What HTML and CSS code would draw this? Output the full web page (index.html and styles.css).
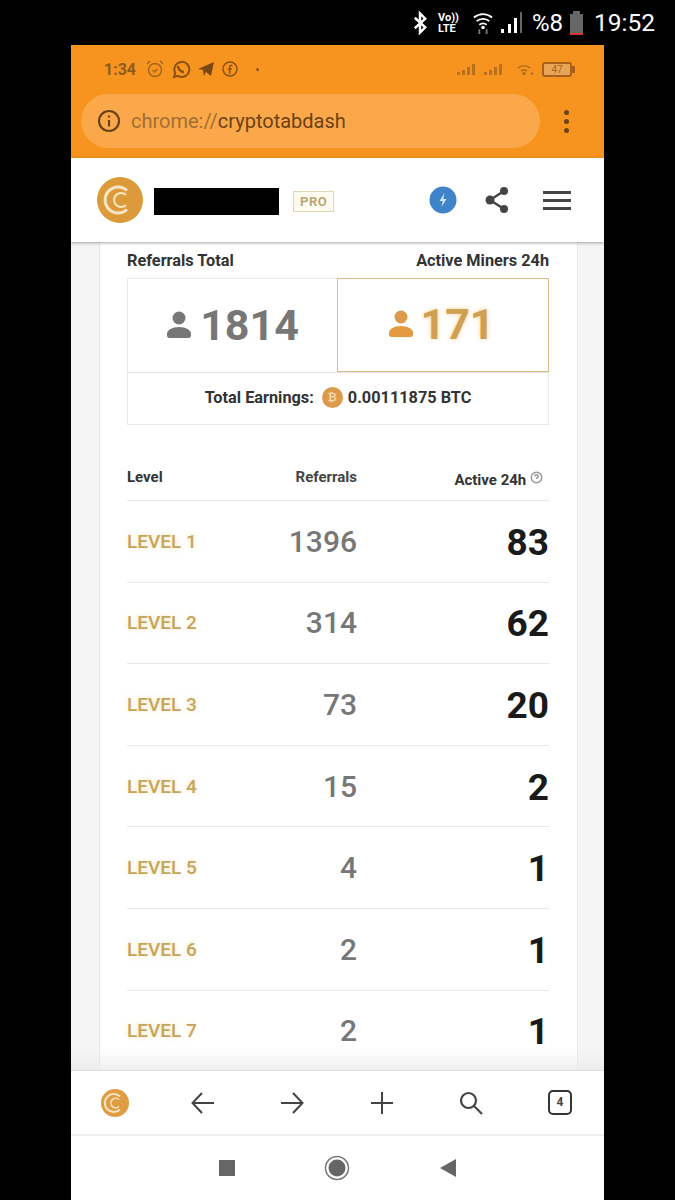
FILE: index.html
```html
<!DOCTYPE html>
<html lang="en">
<head>
    <meta charset="UTF-8">
    <meta name="viewport" content="width=device-width, initial-scale=1.0">
    <title>CryptoTab Dashboard</title>
    <link rel="stylesheet" href="styles.css">
</head>
<body>
    <div class="status-bar">
        <svg class="st-bt" width="14" height="26" viewBox="0 0 16 26"><path d="M2 7l12 11-6 6V2l6 6L2 19" fill="none" stroke="#fff" stroke-width="2.800"/></svg>
        <div class="st-volte"><span>Vo))</span><span>LTE</span></div>
        <svg class="st-wifi" width="20" height="26" viewBox="0 0 22 26"><path d="M1 7c6-5 14-5 20 0M4 11c4-3.400 10-3.400 14 0M7 15c2.500-2 5.500-2 8 0" fill="none" stroke="#fff" stroke-width="2"/><circle cx="11" cy="18" r="2" fill="#fff"/><path d="M7 20v5M15 20v5" stroke="#777" stroke-width="2"/></svg>
        <svg class="st-signal" width="22" height="24" viewBox="0 0 22 24"><rect x="0" y="18" width="3" height="4" fill="#fff"/><rect x="7" y="13" width="3" height="9" fill="#fff"/><rect x="13" y="7" width="3" height="15" fill="#fff"/><rect x="19" y="1" width="2" height="21" fill="#666"/></svg>
        <span class="st-text st-pct">%8</span>
        <svg class="st-batt" width="13" height="24" viewBox="0 0 13 24"><rect x="3" y="0" width="7" height="3" fill="#666"/><rect x="0" y="3" width="13" height="21" fill="#666"/><rect x="0" y="22" width="13" height="2" fill="#d33"/></svg>
        <span class="st-text st-time">19:52</span>
    </div>

    <div class="phone">
        <div class="browser-top">
            <div class="inner-status">
                <span class="inner-time">1:34</span>
                <svg width="20" height="20" viewBox="0 0 20 20" fill="none" stroke="#a8651e" stroke-width="1.500"><circle cx="10" cy="11" r="6.500"/><path d="M2 5l3-3M18 5l-3-3M7.500 11l2 2 3-3"/></svg>
                <svg width="20" height="20" viewBox="0 0 20 20" fill="none" stroke="#8a5218" stroke-width="2"><path d="M3 18l1.200-4.200A7.500 7.500 0 1 1 7 16.800z"/><path d="M7 7c0 3 3 6 6 6" stroke-width="2.400"/></svg>
                <svg width="18" height="18" viewBox="0 0 18 18"><path d="M1 9L17 2l-3 14-5-4-2 4-1-6z" fill="#7a4714"/></svg>
                <svg width="18" height="18" viewBox="0 0 18 18" fill="none" stroke="#8a5218" stroke-width="1.500"><circle cx="9" cy="9" r="7"/><path d="M11.500 5.500H10c-1 0-1.300.6-1.300 1.500v7M6.800 9h4"/></svg>
                <span class="inner-dot"></span>
                <div class="inner-right">
                    <svg width="19" height="13" viewBox="0 0 19 13"><path d="M0 12h3V9H0zM5 12h3V7H5zM10 12h3V4h-3zM15 12h3V1h-3z" fill="#b8701f"/></svg>
                    <svg width="19" height="13" viewBox="0 0 19 13"><path d="M0 12h3V9H0zM5 12h3V7H5zM10 12h3V4h-3zM15 12h3V1h-3z" fill="#b8701f"/></svg>
                    <svg class="inner-wifi" width="16" height="12" viewBox="0 0 16 12" fill="none" stroke="#b8701f" stroke-width="1.700"><path d="M0 5c4-3 8-3 12 0M3 8c2-1.500 4-1.500 6 0"/><circle cx="6" cy="10.500" r="1" fill="#b8701f"/><circle cx="14" cy="10.500" r="1.300" fill="#b8701f" stroke="none"/></svg>
                    <div class="inner-batt">47</div>
                </div>
            </div>
            <div class="url-row">
                <div class="url-pill">
                    <svg width="24" height="24" viewBox="0 0 24 24" fill="none" stroke="#6b4214" stroke-width="2.200"><circle cx="12" cy="12" r="10"/><path d="M12 11v6.500M12 6.500v2"/></svg>
                    <span class="url-text"><span class="url-scheme">chrome://</span>cryptotabdash</span>
                </div>
                <div class="url-menu"><i></i><i></i><i></i></div>
            </div>
        </div>

        <header class="site-header">
            <svg class="logo" width="46" height="46" viewBox="0 0 46 46"><circle cx="23" cy="23" r="23" fill="#dd9a3a"/><path d="M30 13.500a13 13 0 1 0 0 19" fill="none" stroke="#f7e6c4" stroke-width="3"/><path d="M29 18a7 7 0 1 0 0 10" fill="none" stroke="#f7e6c4" stroke-width="2"/></svg>
            <div class="name-block"></div>
            <span class="pro-badge">PRO</span>
            <div class="header-icons">
                <svg class="bolt-icon" width="28" height="28" viewBox="0 0 28 28"><circle cx="14" cy="14" r="13.500" fill="#3f83c9"/><path d="M15.500 7l-5 8h3.200l-1.200 6 5-8h-3.200z" fill="#cfe6fb"/></svg>
                <svg class="share-icon" width="26" height="28" viewBox="0 0 26 28"><path d="M20 5L6 14l14 9" fill="none" stroke="#444" stroke-width="2.400"/><circle cx="20" cy="5" r="4" fill="#444"/><circle cx="6" cy="14" r="4.500" fill="#444"/><circle cx="20" cy="23" r="4" fill="#444"/></svg>
                <div class="burger"><i></i><i></i><i></i></div>
            </div>
        </header>

        <main class="page">
            <section class="card">
                <div class="totals-head">
                    <span>Referrals Total</span>
                    <span>Active Miners 24h</span>
                </div>
                <div class="totals">
                    <div class="total-cell">
                        <svg width="26" height="30" viewBox="0 0 26 30"><circle cx="13" cy="8" r="6.500" fill="currentColor"/><path d="M1 24c0-4 5-7 12-7s12 3 12 7v1.500c0 1.500-1 2.500-2.500 2.500h-19C2 28 1 27 1 25.500z" fill="currentColor"/></svg>
                        <span>1814</span>
                    </div>
                    <div class="total-cell total-active">
                        <svg width="26" height="30" viewBox="0 0 26 30"><circle cx="13" cy="8" r="6.500" fill="#dc9a4a"/><path d="M1 24c0-4 5-7 12-7s12 3 12 7v1.500c0 1.500-1 2.500-2.500 2.500h-19C2 28 1 27 1 25.500z" fill="#e39a3e"/></svg>
                        <span>171</span>
                    </div>
                    <div class="total-earn">
                        <span>Total Earnings:</span>
                        <span class="btc-coin">₿</span>
                        <span>0.00111875 BTC</span>
                    </div>
                </div>

                <div class="lv-row lv-head">
                    <span>Level</span>
                    <span class="lv-ref">Referrals</span>
                    <span class="lv-act">Active 24h <svg width="13" height="13" viewBox="0 0 13 13" fill="none" stroke="#999" stroke-width="1.500"><circle cx="6.500" cy="6.500" r="5.200"/><path d="M4.800 5.500c0-2.200 3.400-2.200 3.400 0 0 1.200-1.700 1.200-1.700 2.500"/></svg></span>
                </div>
                <div class="lv-row"><span class="lv-name">LEVEL 1</span><span class="lv-ref">1396</span><span class="lv-act">83</span></div>
                <div class="lv-row"><span class="lv-name">LEVEL 2</span><span class="lv-ref">314</span><span class="lv-act">62</span></div>
                <div class="lv-row"><span class="lv-name">LEVEL 3</span><span class="lv-ref">73</span><span class="lv-act">20</span></div>
                <div class="lv-row"><span class="lv-name">LEVEL 4</span><span class="lv-ref">15</span><span class="lv-act">2</span></div>
                <div class="lv-row"><span class="lv-name">LEVEL 5</span><span class="lv-ref">4</span><span class="lv-act">1</span></div>
                <div class="lv-row"><span class="lv-name">LEVEL 6</span><span class="lv-ref">2</span><span class="lv-act">1</span></div>
                <div class="lv-row"><span class="lv-name">LEVEL 7</span><span class="lv-ref">2</span><span class="lv-act">1</span></div>
            </section>
        </main>

        <div class="toolbar">
            <svg class="tool-logo" width="30" height="30" viewBox="0 0 30 30"><circle cx="15" cy="15" r="14" fill="#e09c42"/><path d="M20 8.500a9 9 0 1 0 0 13" fill="none" stroke="#f8e6c6" stroke-width="2"/><path d="M19 11.500a4.800 4.800 0 1 0 0 7" fill="none" stroke="#f8e6c6" stroke-width="1.500"/></svg>
            <svg width="26" height="26" viewBox="0 0 26 26" fill="none" stroke="#444" stroke-width="2"><path d="M24 13H3M12 3L2.500 13 12 23"/></svg>
            <svg width="26" height="26" viewBox="0 0 26 26" fill="none" stroke="#444" stroke-width="2"><path d="M2 13h21M14 3l9.500 10L14 23"/></svg>
            <svg width="26" height="26" viewBox="0 0 26 26" fill="none" stroke="#444" stroke-width="2"><path d="M13 2v22M2 13h22"/></svg>
            <svg width="26" height="26" viewBox="0 0 26 26" fill="none" stroke="#444" stroke-width="2.200"><circle cx="10.500" cy="10.500" r="7.500"/><path d="M16 16l8 8"/></svg>
            <div class="tabs-count">4</div>
        </div>

        <nav class="nav-bar">
            <span class="nav-square"></span>
            <svg width="26" height="26" viewBox="0 0 26 26"><circle cx="13" cy="13" r="11.500" fill="none" stroke="#777" stroke-width="1.500"/><circle cx="13" cy="13" r="8.500" fill="#666"/></svg>
            <svg width="18" height="20" viewBox="0 0 18 20"><path d="M17 1v18L1 10z" fill="#666"/></svg>
        </nav>
    </div>
</body>
</html>
```

FILE: styles.css
```css
* {
    box-sizing: border-box;
}

body {
    margin: 0;
    height: 1200px;
    overflow: hidden;
    background: #000;
    font-family: Roboto, "Liberation Sans", sans-serif;
}

/* device status bar */
.status-bar {
    height: 45px;
    padding-right: 20px;
    display: flex;
    align-items: center;
    justify-content: flex-end;
    color: #fff;
}

.st-volte {
    margin-left: 11px;
    display: flex;
    flex-direction: column;
    font-size: 11px;
    line-height: 11px;
    font-weight: 700;
}

.st-wifi {
    margin-left: 14px;
}

.st-signal {
    margin-left: 8px;
}

.st-text {
    font-size: 25px;
}

.st-pct {
    margin-left: 9px;
    font-size: 24px;
}

.st-time {
    font-size: 24.500px;
}

.st-batt {
    margin-left: 7px;
    margin-right: 11px;
}

.phone {
    width: 533px;
    height: 1155px;
    margin-left: 71px;
    background: #fff;
    display: flex;
    flex-direction: column;
}

/* orange browser bar */
.browser-top {
    height: 113px;
    background: #f7941f;
    flex-shrink: 0;
}

.inner-status {
    height: 48px;
    padding: 0 32px 0 33px;
    display: flex;
    align-items: center;
    gap: 6px;
}

.inner-time {
    font-size: 16px;
    font-weight: 700;
    color: #8f5a1c;
    margin-right: 3px;
}

.inner-dot {
    width: 3px;
    height: 3px;
    border-radius: 50%;
    background: #8a5218;
    margin-left: 11px;
}

.inner-right {
    margin-left: auto;
    display: flex;
    align-items: center;
    gap: 8px;
}

.inner-wifi {
    margin-left: 7px;
}

.inner-batt {
    width: 30px;
    height: 15px;
    border: 2px solid #a8601a;
    border-radius: 3px;
    font-size: 10px;
    line-height: 11px;
    text-align: center;
    color: #a8651e;
    background: #e9a556;
    position: relative;
}

.inner-batt::after {
    content: "";
    position: absolute;
    right: -5px;
    top: 2px;
    width: 3px;
    height: 7px;
    background: #a8601a;
}

.url-row {
    height: 56px;
    padding: 0 35px 0 10px;
    display: flex;
    align-items: center;
}

.url-pill {
    width: 459px;
    height: 54px;
    border-radius: 27px;
    background: #faa84a;
    padding-left: 16px;
    display: flex;
    align-items: center;
    gap: 10px;
}

.url-text {
    font-size: 20px;
    color: #6b4214;
}

.url-scheme {
    color: #a26f32;
}

.url-menu {
    margin-left: auto;
    display: flex;
    flex-direction: column;
    gap: 4px;
}

.url-menu i {
    width: 5px;
    height: 5px;
    border-radius: 50%;
    background: #6b4214;
}

/* site header */
.site-header {
    height: 84px;
    padding: 0 33px 0 26px;
    flex-shrink: 0;
    display: flex;
    align-items: center;
    background: #fff;
    box-shadow: 0 1px 3px rgba(0, 0, 0, 0.35);
    position: relative;
    z-index: 1;
}

.name-block {
    width: 125px;
    height: 27px;
    background: #000;
    margin: 3px 0 0 11px;
}

.pro-badge {
    margin: 2px 0 0 14px;
    padding: 2px 6px;
    border: 1px solid #e2d6ae;
    background: #fdfbf0;
    font-size: 13px;
    font-weight: 700;
    letter-spacing: 0.5px;
    color: #b8a878;
}

.header-icons {
    margin-left: auto;
    display: flex;
    align-items: center;
}

.share-icon {
    margin-left: 27px;
}

.burger {
    margin-left: 33px;
    display: flex;
    flex-direction: column;
    gap: 5px;
}

.burger i {
    width: 28px;
    height: 3px;
    background: #444;
}

/* scrolling page */
.page {
    flex: 1;
    min-height: 0;
    overflow: hidden;
    background: #f5f5f5;
    padding: 0 26px 0 28px;
    position: relative;
}

.page::after {
    content: "";
    position: absolute;
    left: 0;
    right: 0;
    bottom: 0;
    height: 22px;
    background: linear-gradient(rgba(235, 235, 235, 0), rgba(235, 235, 235, 0.8));
}

.card {
    height: 100%;
    background: #fff;
    padding: 0 28px 0 27px;
    border-left: 1px solid #e6e6e6;
    border-right: 1px solid #e6e6e6;
}

.totals-head {
    height: 36px;
    display: flex;
    align-items: center;
    justify-content: space-between;
    font-size: 16.300px;
    font-weight: 700;
    color: #333;
}

.totals {
    display: grid;
    grid-template-columns: 209px 1fr;
    height: 147px;
    grid-template-rows: 93px 53px;
    border: 1px solid #e9e9e9;
    margin-bottom: 25px;
}

.total-cell {
    display: flex;
    align-items: center;
    justify-content: center;
    gap: 8px;
    padding-bottom: 2px;
    font-size: 43px;
    font-weight: 700;
    color: #777;
}

.total-active {
    color: #cfa052;
    text-shadow: 0 0 5px rgba(245, 190, 100, 0.7);
    border: 1px solid #ddbb88;
    margin: -1px -1px 0 0;
    height: 94px;
    padding-right: 3px;
    gap: 6px;
}

.total-earn {
    grid-column: 1 / 3;
    border-top: 1px solid #e4e4e4;
    padding-bottom: 4px;
    display: flex;
    align-items: center;
    justify-content: center;
    gap: 8px;
    font-size: 16.300px;
    font-weight: 700;
    color: #333;
}

.total-earn span:last-child {
    margin-left: -3px;
}

.btc-coin {
    width: 21px;
    height: 21px;
    border-radius: 50%;
    background: #dd9a4a;
    color: #f3d9ad;
    font-size: 11px;
    line-height: 21px;
    text-align: center;
}

/* level table */
.lv-row {
    height: 81.6px;
    display: grid;
    grid-template-columns: 1fr 90px 192px;
    align-items: center;
    border-top: 1px solid #e8e8e8;
    font-size: 30px;
    font-weight: 500;
}

.lv-head {
    height: 50px;
    padding-top: 4px;
    border-top: none;
    font-size: 15px;
    font-weight: 700;
    color: #333;
}

.lv-name {
    font-size: 19px;
    font-weight: 500;
    color: #c4a55c;
    text-shadow: 0 0 5px rgba(245, 205, 120, 0.5);
}

.lv-ref {
    text-align: right;
    color: #777;
}

.lv-act {
    text-align: right;
    font-size: 37px;
    font-weight: 700;
    padding-top: 2px;
    color: #1a1a1a;
}

.lv-head .lv-ref {
    font-size: 15px;
    color: #444;
}

.lv-head .lv-act {
    font-size: 15px;
    color: #333;
    padding: 5px 6px 0 0;
}

.lv-head svg {
    vertical-align: 1px;
}

/* browser toolbar */
.toolbar {
    height: 66px;
    flex-shrink: 0;
    padding: 0 32px 0 29px;
    display: flex;
    align-items: center;
    justify-content: space-between;
    background: #fff;
    border-top: 1px solid #ddd;
    border-bottom: 2px solid #eee;
}

.tool-logo {
    margin-right: -4px;
}

.tabs-count {
    width: 24px;
    height: 25px;
    border: 2px solid #333;
    border-radius: 5px;
    font-size: 12px;
    font-weight: 700;
    line-height: 21px;
    text-align: center;
    color: #444;
}

/* android nav */
.nav-bar {
    height: 64px;
    flex-shrink: 0;
    display: flex;
    align-items: center;
    justify-content: center;
    gap: 89px;
}

.nav-square {
    width: 16px;
    height: 16px;
    background: #666;
}
```
